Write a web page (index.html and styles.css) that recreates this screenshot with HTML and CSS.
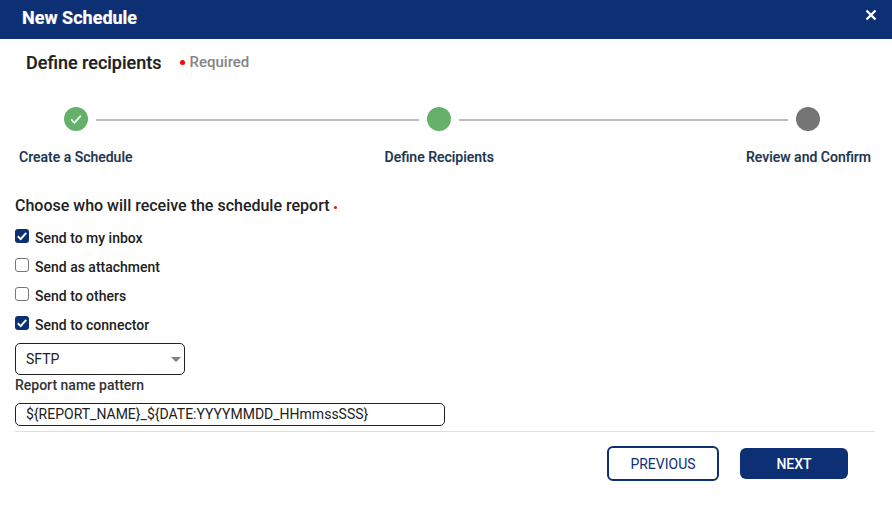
FILE: index.html
```html
<!DOCTYPE html>
<html lang="en">
<head>
<meta charset="utf-8">
<title>New Schedule</title>
<link rel="stylesheet" href="styles.css">
</head>
<body>
<div class="dialog">
  <header class="titlebar">
    <h1 class="title">New Schedule</h1>
    <svg class="close" viewBox="0 0 12 12" width="12" height="12"><path d="M1.5 1.5l9 9M10.5 1.5l-9 9" stroke="#fff" stroke-width="2.4" fill="none"/></svg>
  </header>
  <div class="subhead">
    <h2 class="subtitle">Define recipients</h2>
    <span class="dot big"></span>
    <span class="required">Required</span>
  </div>
  <div class="stepper">
    <div class="track">
      <span class="circle green"><svg viewBox="0 0 24 24" width="18" height="18"><path d="M5.5 12.5l4.5 4.5 8.5-9.5" stroke="#fff" stroke-width="2.2" fill="none"/></svg></span>
      <span class="line l1"></span>
      <span class="circle green"></span>
      <span class="line l2"></span>
      <span class="circle gray"></span>
    </div>
    <div class="labels">
      <span>Create a Schedule</span>
      <span class="mid">Define Recipients</span>
      <span>Review and Confirm</span>
    </div>
  </div>
  <main class="form">
    <div class="question">Choose who will receive the schedule report<span class="dot small"></span></div>
    <div class="check"><span class="box on"><svg viewBox="0 0 14 14" width="14" height="14"><path d="M2.8 7.2l2.9 2.9 5.5-6.2" stroke="#fff" stroke-width="2" fill="none"/></svg></span>Send to my inbox</div>
    <div class="check"><span class="box"></span>Send as attachment</div>
    <div class="check"><span class="box"></span>Send to others</div>
    <div class="check"><span class="box on"><svg viewBox="0 0 14 14" width="14" height="14"><path d="M2.8 7.2l2.9 2.9 5.5-6.2" stroke="#fff" stroke-width="2" fill="none"/></svg></span>Send to connector</div>
    <div class="select">SFTP<span class="caret"></span></div>
    <div class="field-label">Report name pattern</div>
    <div class="input">${REPORT_NAME}_${DATE:YYYYMMDD_HHmmssSSS}</div>
  </main>
  <footer class="actions">
    <button class="btn outline">PREVIOUS</button>
    <button class="btn solid">NEXT</button>
  </footer>
</div>
</body>
</html>
```
FILE: styles.css
```css
* { box-sizing: border-box; }
html, body { margin: 0; padding: 0; background: #fff; }
body { font-family: Roboto, "Liberation Sans", sans-serif; color: #212121; }
.dialog { width: 892px; height: 505px; overflow: hidden; }
.titlebar {
  height: 39px; background: #0d2f73; color: #fff;
  display: flex; align-items: center; justify-content: space-between;
  padding: 0 15px 0 22px;
}
.title { margin: 0; font-size: 18px; font-weight: 700; line-height: 35px; padding-bottom: 4px; -webkit-text-stroke: 0.2px #fff; }
.close { margin-bottom: 9px; }
.subhead { display: flex; align-items: center; height: 46px; padding: 0 0 0 26px; }
.subtitle { margin: 0; font-size: 18px; font-weight: 500; color: #212121; -webkit-text-stroke: 0.2px #212121; }
.dot { display: inline-block; border-radius: 50%; background: #f00; }
.dot.big { width: 5px; height: 5px; margin: 0 5px 0 18px; }
.dot.small { width: 3px; height: 3px; margin: 0 0 0 4px; vertical-align: 2px; }
.required { font-size: 15px; font-weight: 500; color: #858585; line-height: 18px; }
.stepper { height: 100px; padding: 22px 21px 0 19px; }
.track { display: flex; align-items: center; height: 24px; padding: 0 51px 0 45px; }
.circle { width: 24px; height: 24px; border-radius: 50%; flex: none; display: flex; align-items: center; justify-content: center; }
.green { background: #66b16a; }
.gray { background: #757575; }
.line { height: 2px; background: #bdbdbd; margin: 2px 8px 0; }
.l1 { width: 323px; }
.l2 { width: 329px; }
.labels { display: flex; justify-content: space-between; margin-top: 18px; font-size: 14px; font-weight: 500; color: #1c3550; line-height: 16px; -webkit-text-stroke: 0.15px #1c3550; }
.form { padding: 0 15px; margin-top: 11px; }
.question { font-size: 16px; font-weight: 500; line-height: 20px; margin-bottom: 7px; }
.check { display: flex; align-items: center; height: 29px; font-size: 14px; font-weight: 500; color: #212121; }
.box { width: 14px; height: 14px; border: 1px solid #767676; border-radius: 3px; margin-right: 6px; flex: none; background: #fff; display: block; margin-top: -3px; }
.box.on { background: #0d2f73; border: 0; }
.box svg { display: block; }
.select {
  position: relative; width: 170px; height: 32px; margin-top: 4px;
  border: 1px solid #212121; border-radius: 5px;
  font-size: 14px; line-height: 30px; padding-left: 10px; color: #212121;
}
.caret { position: absolute; right: 3px; top: 13px; border-left: 5px solid transparent; border-right: 5px solid transparent; border-top: 5px solid #7f7f7f; }
.field-label { font-size: 14px; font-weight: 500; line-height: 18px; margin-top: 1px; color: #333; }
.input {
  width: 430px; height: 23px; margin-top: 9px;
  border: 1px solid #212121; border-radius: 5px;
  font-size: 14px; line-height: 21px; padding-left: 10px; color: #212121;
}
.actions {
  margin: 5px 17px 0 15px; border-top: 1px solid #e0e0e0;
  display: flex; justify-content: flex-end; align-items: flex-start; padding: 14px 27px 0 0; gap: 21px;
}
.btn { font-family: inherit; font-size: 14px; border-radius: 6px; padding: 0; }
.outline { width: 112px; height: 35px; background: #fff; border: 2px solid #0d2f73; color: #0d2f73; }
.solid { width: 108px; height: 31px; margin-top: 2px; background: #0d2f73; border: 0; color: #fff; font-weight: 500; }
```
